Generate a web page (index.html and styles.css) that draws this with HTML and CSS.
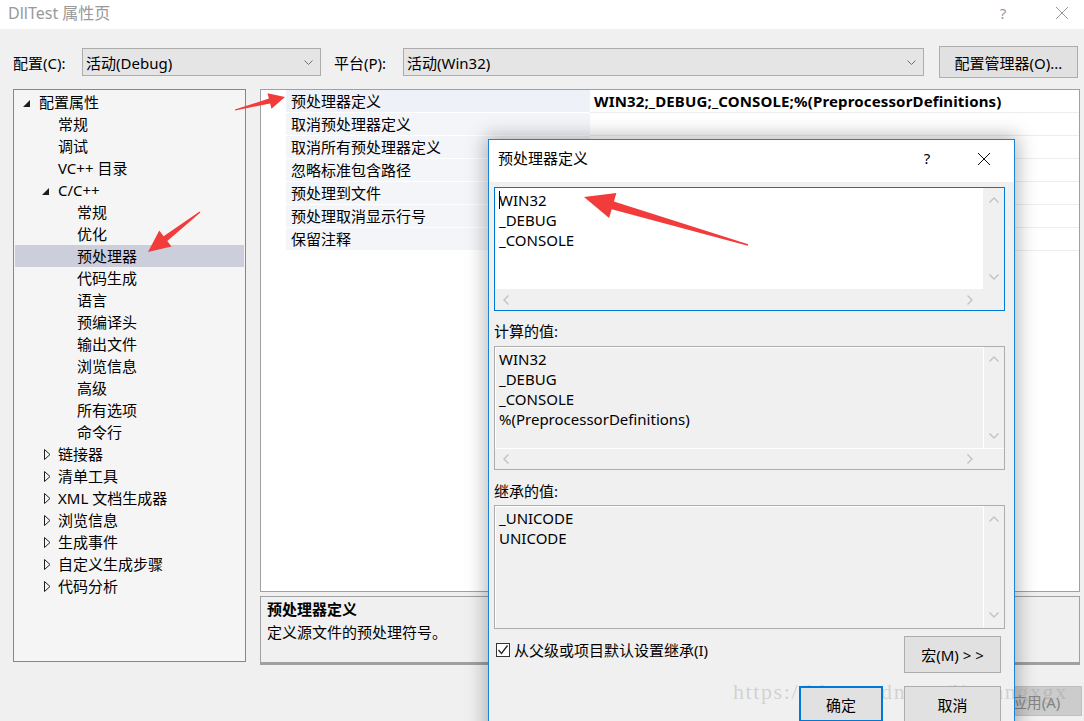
FILE: index.html
```html
<!DOCTYPE html>
<html lang="zh-CN">

<head>
    <meta charset="UTF-8">
    <title>DllTest 属性页</title>
    <link rel="stylesheet" href="styles.css">
</head>

<body>
    <div class="window">
        <div class="titlebar">
            <span class="title">DllTest 属性页</span>
            <span class="title-help">?</span>
            <span class="title-close">
                <svg width="14" height="14" viewBox="0 0 14 14"><path d="M1 1L13 13M13 1L1 13" /></svg>
            </span>
        </div>

        <div class="config-row">
            <label class="config-label">配置(C):</label>
            <div class="combo combo-config">
                <span>活动(Debug)</span>
                <svg class="chev" width="9" height="5" viewBox="0 0 9 5"><polyline points="0.5,0.5 4.5,4.5 8.5,0.5" /></svg>
            </div>
            <label class="config-label platform">平台(P):</label>
            <div class="combo combo-platform">
                <span>活动(Win32)</span>
                <svg class="chev" width="9" height="5" viewBox="0 0 9 5"><polyline points="0.5,0.5 4.5,4.5 8.5,0.5" /></svg>
            </div>
            <button class="btn btn-manager">配置管理器(O)...</button>
        </div>

        <div class="main">
            <div class="tree">
                <div class="tree-row"><span class="toggle"><svg width="8" height="8" viewBox="0 0 8 8"><polygon class="open" points="7,0 7,7 0,7" /></svg></span>配置属性</div>
                <div class="tree-row lvl-1"><span class="toggle"></span>常规</div>
                <div class="tree-row lvl-1"><span class="toggle"></span>调试</div>
                <div class="tree-row lvl-1"><span class="toggle"></span>VC++ 目录</div>
                <div class="tree-row lvl-1"><span class="toggle"><svg width="8" height="8" viewBox="0 0 8 8"><polygon class="open" points="7,0 7,7 0,7" /></svg></span>C/C++</div>
                <div class="tree-row lvl-2"><span class="toggle"></span>常规</div>
                <div class="tree-row lvl-2"><span class="toggle"></span>优化</div>
                <div class="tree-row lvl-2 selected"><span class="toggle"></span>预处理器</div>
                <div class="tree-row lvl-2"><span class="toggle"></span>代码生成</div>
                <div class="tree-row lvl-2"><span class="toggle"></span>语言</div>
                <div class="tree-row lvl-2"><span class="toggle"></span>预编译头</div>
                <div class="tree-row lvl-2"><span class="toggle"></span>输出文件</div>
                <div class="tree-row lvl-2"><span class="toggle"></span>浏览信息</div>
                <div class="tree-row lvl-2"><span class="toggle"></span>高级</div>
                <div class="tree-row lvl-2"><span class="toggle"></span>所有选项</div>
                <div class="tree-row lvl-2"><span class="toggle"></span>命令行</div>
                <div class="tree-row lvl-1"><span class="toggle closed"><svg width="7" height="11" viewBox="0 0 7 11"><polygon points="0.5,0.5 6,5.5 0.5,10.5" /></svg></span>链接器</div>
                <div class="tree-row lvl-1"><span class="toggle closed"><svg width="7" height="11" viewBox="0 0 7 11"><polygon points="0.5,0.5 6,5.5 0.5,10.5" /></svg></span>清单工具</div>
                <div class="tree-row lvl-1"><span class="toggle closed"><svg width="7" height="11" viewBox="0 0 7 11"><polygon points="0.5,0.5 6,5.5 0.5,10.5" /></svg></span>XML 文档生成器</div>
                <div class="tree-row lvl-1"><span class="toggle closed"><svg width="7" height="11" viewBox="0 0 7 11"><polygon points="0.5,0.5 6,5.5 0.5,10.5" /></svg></span>浏览信息</div>
                <div class="tree-row lvl-1"><span class="toggle closed"><svg width="7" height="11" viewBox="0 0 7 11"><polygon points="0.5,0.5 6,5.5 0.5,10.5" /></svg></span>生成事件</div>
                <div class="tree-row lvl-1"><span class="toggle closed"><svg width="7" height="11" viewBox="0 0 7 11"><polygon points="0.5,0.5 6,5.5 0.5,10.5" /></svg></span>自定义生成步骤</div>
                <div class="tree-row lvl-1"><span class="toggle closed"><svg width="7" height="11" viewBox="0 0 7 11"><polygon points="0.5,0.5 6,5.5 0.5,10.5" /></svg></span>代码分析</div>
            </div>

            <div class="right">
                <div class="grid">
                    <div class="grid-row">
                        <div class="grid-margin"></div>
                        <div class="grid-name first">预处理器定义</div>
                        <div class="grid-value">WIN32;_DEBUG;_CONSOLE;%(PreprocessorDefinitions)</div>
                    </div>
                    <div class="grid-row">
                        <div class="grid-margin"></div>
                        <div class="grid-name">取消预处理器定义</div>
                        <div class="grid-value"></div>
                    </div>
                    <div class="grid-row">
                        <div class="grid-margin"></div>
                        <div class="grid-name">取消所有预处理器定义</div>
                        <div class="grid-value"></div>
                    </div>
                    <div class="grid-row">
                        <div class="grid-margin"></div>
                        <div class="grid-name">忽略标准包含路径</div>
                        <div class="grid-value"></div>
                    </div>
                    <div class="grid-row">
                        <div class="grid-margin"></div>
                        <div class="grid-name">预处理到文件</div>
                        <div class="grid-value"></div>
                    </div>
                    <div class="grid-row">
                        <div class="grid-margin"></div>
                        <div class="grid-name">预处理取消显示行号</div>
                        <div class="grid-value"></div>
                    </div>
                    <div class="grid-row">
                        <div class="grid-margin"></div>
                        <div class="grid-name">保留注释</div>
                        <div class="grid-value"></div>
                    </div>
                </div>
                <div class="desc">
                    <div class="desc-title">预处理器定义</div>
                    <div>定义源文件的预处理符号。</div>
                </div>
            </div>
        </div>

        <div class="bottom-buttons">
            <button class="btn main-btn">确定</button>
            <button class="btn main-btn">取消</button>
            <button class="btn main-btn disabled">应用(A)</button>
        </div>
    </div>

    <div class="dialog">
        <div class="dialog-title">
            <span class="dialog-title-text">预处理器定义</span>
            <span class="dialog-help">?</span>
            <span class="dialog-close">
                <svg width="14" height="14" viewBox="0 0 14 14"><path d="M1 1L13 13M13 1L1 13" /></svg>
            </span>
        </div>

        <div class="dialog-body">
            <div class="textbox active">
                <div class="tb-text"><span class="caret"></span>WIN32<br>_DEBUG<br>_CONSOLE</div>
                <div class="vscroll">
                    <svg width="10" height="6" viewBox="0 0 10 6"><polyline points="0.5,5.5 5,1 9.5,5.5" /></svg>
                    <svg width="10" height="6" viewBox="0 0 10 6"><polyline points="0.5,0.5 5,5 9.5,0.5" /></svg>
                </div>
                <div class="hscroll">
                    <svg width="6" height="10" viewBox="0 0 6 10"><polyline points="5.5,0.5 1,5 5.5,9.5" /></svg>
                    <svg width="6" height="10" viewBox="0 0 6 10"><polyline points="0.5,0.5 5,5 0.5,9.5" /></svg>
                </div>
            </div>

            <div class="field-label">计算的值:</div>
            <div class="textbox readonly">
                <div class="tb-text">WIN32<br>_DEBUG<br>_CONSOLE<br>%(PreprocessorDefinitions)</div>
                <div class="vscroll">
                    <svg width="10" height="6" viewBox="0 0 10 6"><polyline points="0.5,5.5 5,1 9.5,5.5" /></svg>
                    <svg width="10" height="6" viewBox="0 0 10 6"><polyline points="0.5,0.5 5,5 9.5,0.5" /></svg>
                </div>
                <div class="hscroll">
                    <svg width="6" height="10" viewBox="0 0 6 10"><polyline points="5.5,0.5 1,5 5.5,9.5" /></svg>
                    <svg width="6" height="10" viewBox="0 0 6 10"><polyline points="0.5,0.5 5,5 0.5,9.5" /></svg>
                </div>
            </div>

            <div class="field-label second">继承的值:</div>
            <div class="textbox readonly no-hscroll">
                <div class="tb-text">_UNICODE<br>UNICODE</div>
                <div class="vscroll tall">
                    <svg width="10" height="6" viewBox="0 0 10 6"><polyline points="0.5,5.5 5,1 9.5,5.5" /></svg>
                    <svg width="10" height="6" viewBox="0 0 10 6"><polyline points="0.5,0.5 5,5 9.5,0.5" /></svg>
                </div>
            </div>

            <div class="check-row">
                <label class="check">
                    <span class="checkbox">
                        <svg width="12" height="12" viewBox="0 0 12 12"><polyline points="1.5,6 4.5,9.5 10.5,1.5" /></svg>
                    </span>
                    从父级或项目默认设置继承(I)
                </label>
                <button class="btn btn-macro">宏(M) &gt; &gt;</button>
            </div>

            <div class="dialog-buttons">
                <button class="btn btn-ok">确定</button>
                <button class="btn btn-cancel">取消</button>
            </div>
        </div>
    </div>

    <svg class="annotations" width="1084" height="721" viewBox="0 0 1084 721">
        <polygon points="234.9,109.5 268.9,98.6 267.5,93.3 285,97 271.5,108.8 270.1,103.5 235.1,110.5" />
        <polygon points="199.6,211.5 163.6,236.2 159.3,230.6 148,252 171.5,246.5 167.3,241 200.4,212.5" />
        <polygon points="748.2,244.2 613.9,201.6 616.4,193 584,197 609.1,217.9 611.7,209.3 747.8,245.8" />
    </svg>

    <div class="watermark">https://blog.csdn.net/liguangxgx</div>
</body>

</html>
```

FILE: styles.css
```css
body {
    margin: 0;
    width: 1084px;
    height: 721px;
    overflow: hidden;
    position: relative;
    font-family: "Noto Sans", "Noto Sans CJK SC", sans-serif;
    font-size: 15px;
    color: #000;
    background-color: #f0f0f0;
}

.window {
    width: 1084px;
    height: 721px;
    display: flex;
    flex-direction: column;
}

.titlebar {
    height: 29px;
    flex-shrink: 0;
    background-color: #fff;
    display: flex;
    align-items: flex-start;
    padding-top: 3px;
    box-sizing: border-box;
    line-height: 20px;
    color: #999;
}

.title {
    flex: 1;
    padding-left: 8px;
    font-size: 16px;
}

.title-help {
    width: 46px;
    text-align: center;
    margin-right: 14px;
}

.title-close {
    width: 44px;
    display: flex;
    justify-content: center;
    padding-top: 3px;
}

.title-close path,
.dialog-close path {
    stroke: #999;
    stroke-width: 1;
    fill: none;
}

.config-row {
    display: flex;
    align-items: center;
    height: 32px;
    margin-top: 17px;
    padding-left: 13px;
    flex-shrink: 0;
}

.config-label {
    width: 69px;
}

.config-label.platform {
    margin-left: 13px;
}

.combo {
    height: 28px;
    box-sizing: border-box;
    border: 1px solid #acacac;
    background-color: #e5e5e5;
    display: flex;
    align-items: center;
    justify-content: space-between;
    padding: 0 7px 0 3px;
}

.combo-config {
    width: 239px;
}

.combo-platform {
    width: 521px;
}

.chev polyline {
    fill: none;
    stroke: #707070;
    stroke-width: 1;
}

.btn {
    font: inherit;
    color: #000;
    background-color: #e1e1e1;
    border: 1px solid #adadad;
    padding: 0;
    box-sizing: border-box;
}

.btn-manager {
    width: 139px;
    height: 32px;
    margin-left: 15px;
}

.main {
    display: flex;
    gap: 14px;
    margin-top: 11px;
    padding-left: 13px;
    flex-shrink: 0;
}

.tree {
    width: 233px;
    height: 573px;
    box-sizing: border-box;
    border: 1px solid #828790;
    background-color: #f5f5f5;
    padding-top: 1px;
}

.tree-row {
    height: 22px;
    line-height: 22px;
    display: flex;
    align-items: center;
    margin: 0 1px;
    padding-left: 8px;
    white-space: nowrap;
}

.tree-row.lvl-1 {
    padding-left: 27px;
}

.tree-row.lvl-2 {
    padding-left: 46px;
}

.tree-row.selected {
    background-color: #cccedb;
}

.toggle {
    width: 16px;
    height: 22px;
    flex-shrink: 0;
    display: flex;
    align-items: center;
}

.toggle svg {
    margin-top: 3px;
}

.toggle .open {
    fill: #1e1e1e;
}

.toggle.closed svg {
    margin: 1px 0 0 2px;
}

.toggle.closed polygon {
    fill: none;
    stroke: #1e1e1e;
    stroke-width: 1;
}

.right {
    width: 820px;
    display: flex;
    flex-direction: column;
}

.grid {
    height: 503px;
    box-sizing: border-box;
    border: 1px solid #a0a0a0;
    background-color: #fff;
}

.grid-row {
    display: flex;
    height: 23px;
}

.grid-margin {
    width: 25px;
    flex-shrink: 0;
}

.grid-name {
    width: 304px;
    flex-shrink: 0;
    box-sizing: border-box;
    padding-left: 5px;
    line-height: 22px;
    background-color: #f4f5f9;
    border-bottom: 1px solid #fff;
}

.grid-name.first {
    background-color: #eff1f8;
}

.grid-value {
    flex: 1;
    padding-left: 4px;
    line-height: 22px;
    font-weight: bold;
    letter-spacing: 0.15px;
    border-bottom: 1px solid #ededed;
    white-space: nowrap;
}

.desc {
    margin-top: 4px;
    height: 69px;
    box-sizing: border-box;
    border: 1px solid #a0a0a0;
    border-bottom: 3px solid #a0a0a0;
    padding: 1px 6px;
    line-height: 23px;
}

.desc-title {
    font-weight: bold;
}

.bottom-buttons {
    display: flex;
    justify-content: flex-end;
    gap: 8px;
    margin-top: 21px;
    padding-right: 2px;
}

.main-btn {
    width: 92px;
    height: 30px;
}

.main-btn.disabled {
    background-color: #cccccc;
    border-color: #bfbfbf;
    color: #838383;
}

/* modal dialog over the property page */
.dialog {
    position: absolute;
    left: 488px;
    top: 139px;
    width: 527px;
    height: 620px;
    box-sizing: border-box;
    border: 1px solid #1883d7;
    background-color: #f0f0f0;
    box-shadow: 0 0 18px 3px rgba(0, 0, 0, 0.28);
}

.dialog-title {
    height: 42px;
    background-color: #fff;
    display: flex;
    align-items: flex-start;
    line-height: 22px;
}

.dialog-title-text {
    flex: 1;
    padding: 7px 0 0 9px;
}

.dialog-help {
    width: 46px;
    text-align: center;
    padding-top: 7px;
    margin-right: 11px;
}

.dialog-close {
    width: 46px;
    margin-right: 7px;
    display: flex;
    justify-content: center;
    padding-top: 12px;
}

.dialog-close path {
    stroke: #111;
}

.dialog-body {
    padding: 5px 9px 0 5px;
}

.textbox {
    height: 124px;
    box-sizing: border-box;
    border: 1px solid #adadad;
    display: grid;
    grid-template-columns: 1fr 21px;
    grid-template-rows: 1fr 21px;
}

.textbox.active {
    border-color: #0078d7;
    background-color: #fff;
}

.textbox.readonly {
    box-shadow: inset 1px 1px 0 #fff;
}

.textbox.no-hscroll {
    grid-template-rows: 1fr;
}

.tb-text {
    padding: 2px 4px;
    line-height: 20px;
    position: relative;
}

.caret {
    position: absolute;
    left: 4px;
    top: 3px;
    width: 1px;
    height: 18px;
    background-color: #000;
}

.vscroll {
    background-color: #f0f0f0;
    display: flex;
    flex-direction: column;
    justify-content: space-between;
    align-items: center;
    padding: 9px 0;
}

.vscroll.tall {
    padding: 10px 0;
}

.readonly .vscroll {
    border-left: 1px solid #fff;
}

.hscroll {
    grid-column: 1 / 3;
    background-color: #f0f0f0;
    display: flex;
    justify-content: space-between;
    align-items: center;
    padding: 0 31px 0 8px;
}

.readonly .hscroll {
    border-top: 1px solid #fff;
}

.vscroll polyline,
.hscroll polyline {
    fill: none;
    stroke: #c2c2c2;
    stroke-width: 1.4;
}

.field-label {
    margin-top: 10px;
    margin-bottom: 5px;
    line-height: 20px;
}

.field-label.second {
    margin-top: 11px;
    margin-bottom: 4px;
}

.check-row {
    display: flex;
    justify-content: space-between;
    align-items: flex-start;
    margin-top: 7px;
}

.check {
    display: flex;
    align-items: center;
    gap: 4px;
    padding: 5px 0 0 2px;
    line-height: 18px;
}

.checkbox {
    width: 14px;
    height: 14px;
    box-sizing: border-box;
    border: 1px solid #333;
    background-color: #fff;
    display: flex;
    align-items: center;
    justify-content: center;
}

.checkbox polyline {
    fill: none;
    stroke: #222;
    stroke-width: 1.3;
}

.btn-macro {
    width: 97px;
    height: 37px;
    margin-right: 4px;
}

.dialog-buttons {
    display: flex;
    justify-content: flex-end;
    gap: 21px;
    margin-top: 13px;
    padding-right: 4px;
}

/* dialog buttons sit above the watermark */
.dialog-buttons .btn {
    position: relative;
    z-index: 2;
}

.btn-ok {
    width: 84px;
    height: 36px;
    border: 2px solid #0078d7;
}

.btn-cancel {
    width: 97px;
    height: 36px;
}

.annotations {
    position: absolute;
    left: 0;
    top: 0;
    z-index: 3;
    pointer-events: none;
}

.annotations polygon {
    fill: #f23c3c;
}

.watermark {
    position: absolute;
    left: 733px;
    top: 679px;
    z-index: 1;
    font-family: "Liberation Serif", serif;
    font-size: 22px;
    letter-spacing: 1.6px;
    color: rgba(150, 150, 150, 0.35);
    white-space: nowrap;
    pointer-events: none;
}
```
